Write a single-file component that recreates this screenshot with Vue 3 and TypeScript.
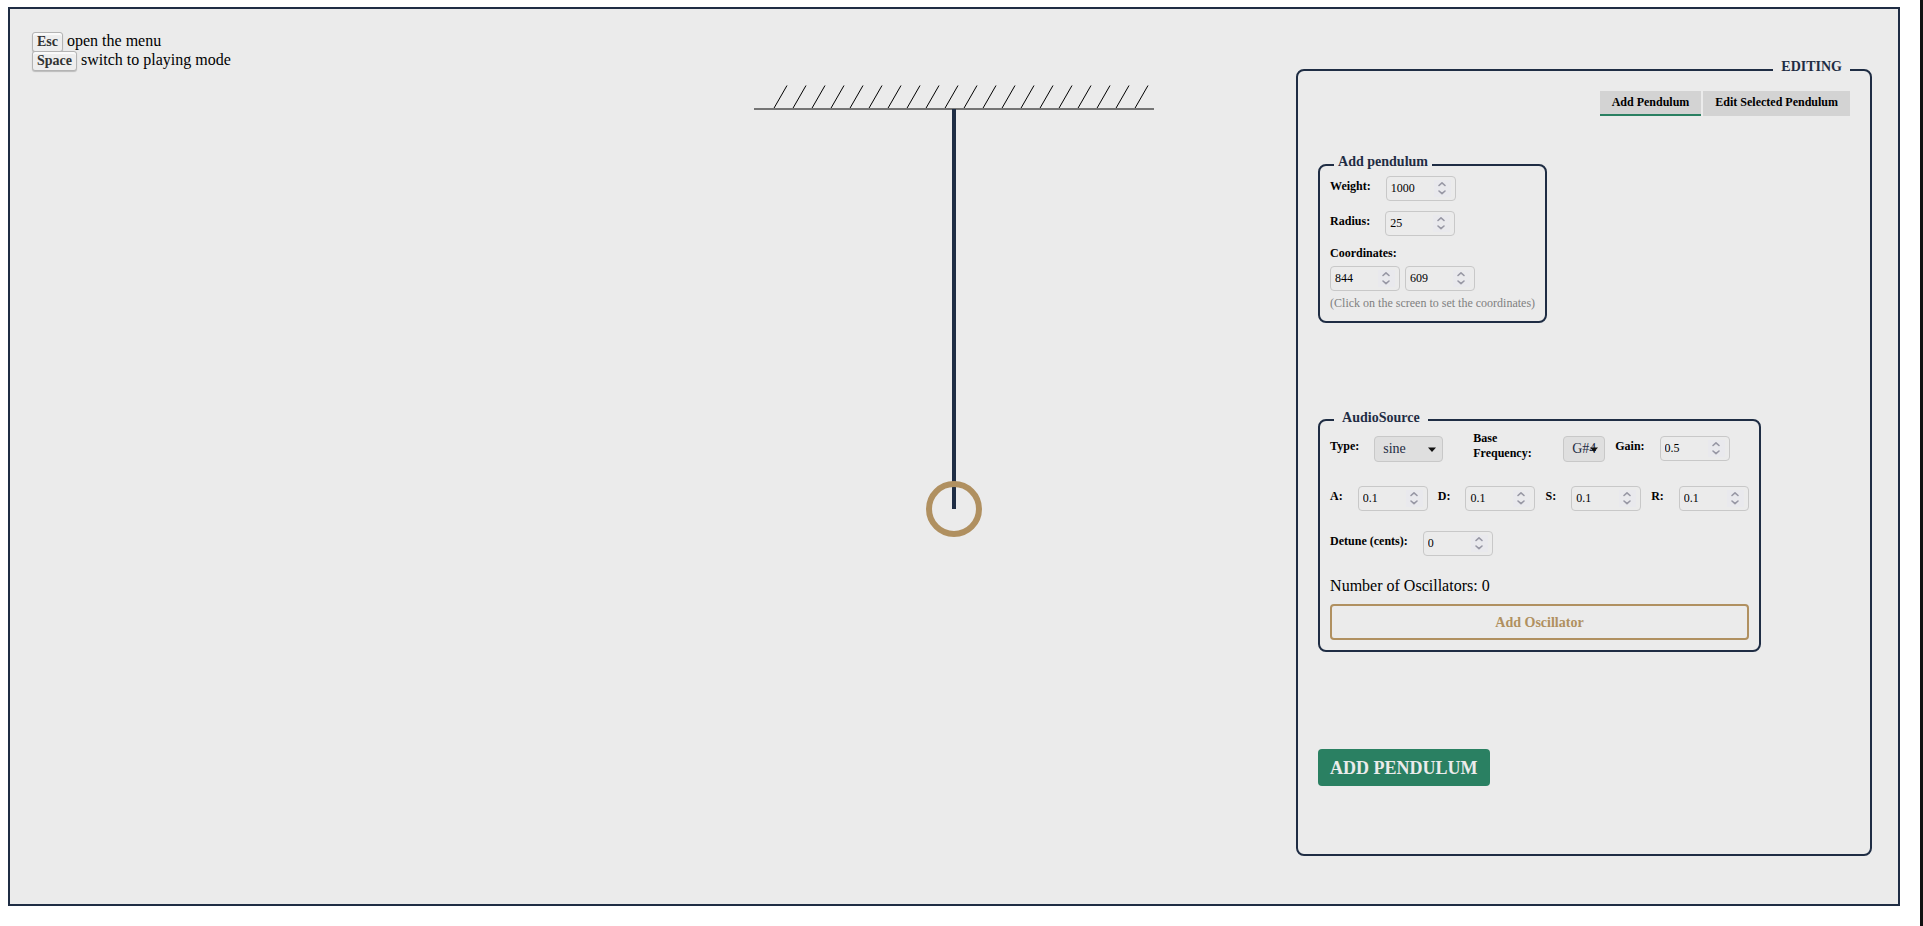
<script setup lang="ts">
import { computed, defineComponent, h, reactive, ref } from 'vue'

type Tab = 'add' | 'edit'

const tabs: { id: Tab; label: string }[] = [
  { id: 'add', label: 'Add Pendulum' },
  { id: 'edit', label: 'Edit Selected Pendulum' },
]
const activeTab = ref<Tab>('add')

const pendulum = reactive({ weight: 1000, radius: 25, x: 844, y: 609 })
const source = reactive({ type: 'sine', note: 'G#4', gain: 0.5, detune: 0 })
const envelope = reactive([
  { key: 'A', value: 0.1 },
  { key: 'D', value: 0.1 },
  { key: 'S', value: 0.1 },
  { key: 'R', value: 0.1 },
])
const oscillators = ref<string[]>([])
const oscillatorCount = computed(() => oscillators.value.length)

const waveTypes = ['sine', 'square', 'sawtooth', 'triangle']
const notes = ['E4', 'F4', 'F#4', 'G4', 'G#4', 'A4']
const hatches = Array.from({ length: 20 }, (_, i) => 20.5 + i * 19)

const NumberBox = defineComponent({
  props: { modelValue: { type: Number, required: true }, step: { type: Number, default: 1 } },
  emits: ['update:modelValue'],
  inheritAttrs: false,
  setup(props, { emit, attrs }) {
    return () =>
      h('span', { class: 'number-box' }, [
        h('input', {
          ...attrs,
          type: 'number',
          step: props.step,
          value: props.modelValue,
          onInput: (e: Event) => emit('update:modelValue', Number((e.target as HTMLInputElement).value)),
        }),
        h('svg', { class: 'spinner', viewBox: '0 0 17 17', 'aria-hidden': 'true' }, [
          h('path', { d: 'M5 5.5 L8 2.8 L11 5.5 M5 11 L8 13.7 L11 11' }),
        ]),
      ])
  },
})
</script>

<template>
  <main class="frame">
    <svg class="scene" viewBox="0 0 402 455" role="img" aria-label="Pendulum">
      <line v-for="x in hatches" :key="x" class="hatch" :x1="x" y1="25" :x2="x + 13.5" y2="1.5" />
      <line class="ceiling" x1="1" y1="25" x2="401" y2="25" />
      <line class="rod" x1="201" y1="25" x2="201" y2="425" />
      <circle class="bob" cx="201" cy="425" r="25" />
    </svg>

    <div class="hints">
      <div><kbd>Esc</kbd> open the menu</div>
      <div><kbd>Space</kbd> switch to playing mode</div>
    </div>

    <fieldset class="box panel">
      <legend>EDITING</legend>
      <nav class="tabs">
        <button
          v-for="tab in tabs"
          :key="tab.id"
          type="button"
          class="tab"
          :class="{ active: activeTab === tab.id }"
          @click="activeTab = tab.id"
        >{{ tab.label }}</button>
      </nav>

      <fieldset class="box group shape">
        <legend>Add pendulum</legend>
        <div class="field">
          <label for="weight">Weight:</label>
          <NumberBox id="weight" v-model="pendulum.weight" />
        </div>
        <div class="field">
          <label for="radius">Radius:</label>
          <NumberBox id="radius" v-model="pendulum.radius" />
        </div>
        <div class="coordinates">
          <label for="coord-x">Coordinates:</label>
          <div class="pair">
            <NumberBox id="coord-x" v-model="pendulum.x" />
            <NumberBox id="coord-y" v-model="pendulum.y" aria-label="Y coordinate" />
          </div>
          <small>(Click on the screen to set the coordinates)</small>
        </div>
      </fieldset>

      <fieldset class="box group audio">
        <legend>AudioSource</legend>
        <div class="row">
          <div class="field type">
            <label for="type">Type:</label>
            <span class="select-box">
              <select id="type" v-model="source.type" class="wave">
                <option v-for="t in waveTypes" :key="t">{{ t }}</option>
              </select>
              <svg class="caret" viewBox="0 0 8 5" aria-hidden="true"><path d="M0 0.5H8L4 5Z" /></svg>
            </span>
          </div>
          <div class="field">
            <label for="note" class="two-line">Base Frequency:</label>
            <span class="select-box">
              <select id="note" v-model="source.note" class="note">
                <option v-for="n in notes" :key="n">{{ n }}</option>
              </select>
              <svg class="caret" viewBox="0 0 8 5" aria-hidden="true"><path d="M0 0.5H8L4 5Z" /></svg>
            </span>
          </div>
          <div class="field">
            <label for="gain">Gain:</label>
            <NumberBox id="gain" v-model="source.gain" :step="0.1" />
          </div>
        </div>
        <div class="row">
          <div v-for="stage in envelope" :key="stage.key" class="field">
            <label :for="`env-${stage.key}`">{{ stage.key }}:</label>
            <NumberBox :id="`env-${stage.key}`" v-model="stage.value" :step="0.1" />
          </div>
        </div>
        <div class="field">
          <label for="detune">Detune (cents):</label>
          <NumberBox id="detune" v-model="source.detune" />
        </div>
        <div class="oscillators">
          <span>Number of Oscillators: {{ oscillatorCount }}</span>
          <button type="button" class="outline" @click="oscillators.push('sine')">Add Oscillator</button>
        </div>
      </fieldset>

      <button type="button" class="primary">ADD PENDULUM</button>
    </fieldset>
  </main>
</template>

<style>
html {
  min-height: 100vh;
  border-right: 3px solid #111;
  background: #fff;
}
body {
  margin: 0;
}
.number-box {
  position: relative;
  display: inline-flex;
}
.number-box input {
  box-sizing: border-box;
  width: 70px;
  height: 25px;
  margin: 0;
  padding: 0 20px 0 4px;
  border: 1px solid #c8c8c8;
  border-radius: 4px;
  background: transparent;
  color: #000;
  font: 12px "Liberation Serif", serif;
  appearance: textfield;
}
.number-box input::-webkit-inner-spin-button,
.number-box input::-webkit-outer-spin-button {
  appearance: none;
  margin: 0;
}
.number-box .spinner {
  position: absolute;
  top: 4px;
  right: 5px;
  width: 17px;
  height: 17px;
  background: #e9e9ed;
  pointer-events: none;
}
.number-box .spinner path {
  fill: none;
  stroke: #9797a4;
  stroke-width: 1.6;
  stroke-linecap: round;
  stroke-linejoin: round;
}
</style>

<style scoped>
.frame {
  box-sizing: border-box;
  display: grid;
  align-items: start;
  min-height: calc(100vh - 27px);
  margin: 7px 20px 0 8px;
  border: 2px solid #1f2d44;
  background: #ebebeb;
  color: #000;
  font: 16px/19px "Liberation Serif", serif;
}
.frame > * {
  grid-area: 1 / 1;
}
.scene {
  justify-self: center;
  width: 402px;
  margin-top: 75px;
}
.hatch {
  stroke: #000;
  stroke-width: 1;
}
.ceiling {
  stroke: #757575;
  stroke-width: 2;
}
.rod {
  stroke: #1f2d44;
  stroke-width: 4;
}
.bob {
  fill: none;
  stroke: #b09060;
  stroke-width: 6;
}
.hints {
  justify-self: start;
  margin: 22px;
}
kbd {
  display: inline-block;
  padding: 2px 4px;
  border: 1px solid #b4b4b4;
  border-radius: 3px;
  background: #eee;
  box-shadow: 0 1px 1px rgba(0, 0, 0, 0.2), inset 0 2px 0 0 rgba(255, 255, 255, 0.7);
  color: #333;
  font: bold 14px/14px "Liberation Serif", serif;
}
.hints > div {
  height: 19px;
}
.box {
  box-sizing: border-box;
  min-width: 0;
  margin: 0;
  border: 2px solid #1f2d44;
  border-radius: 8px;
}
legend {
  padding: 0 8px 6px;
  color: #1f2d44;
  font-size: 14px;
  font-weight: bold;
  line-height: 16px;
}
.panel {
  justify-self: end;
  width: calc(30vw - 1px);
  min-height: calc(85vh + 10px);
  margin: 50px 26px 0 0;
  padding: 10px 20px;
}
.panel > legend {
  margin-left: auto;
}
.tabs {
  display: flex;
  justify-content: flex-end;
  gap: 2px;
}
.tab {
  height: 25px;
  padding: 0 12px;
  border: 0;
  border-bottom: 2px solid transparent;
  background: #d3d3d3;
  color: #000;
  font: bold 12px "Liberation Serif", serif;
}
.tab.active {
  border-bottom-color: #2a8062;
}
.group {
  width: fit-content;
  padding: 0 10px 10px;
}
.group > legend {
  margin-left: 4px;
}
.shape {
  margin-top: 38px;
}
.shape > legend {
  padding: 0 4px 6px;
}
.audio {
  margin-top: 86px;
}
.audio > legend {
  padding-bottom: 4px;
  line-height: 18px;
}
.field {
  display: flex;
  align-items: center;
  gap: 15px;
}
label {
  font-size: 12px;
  font-weight: bold;
  line-height: 15px;
}
.field label {
  margin-bottom: 5px;
}
.shape .field {
  margin-bottom: 10px;
}
.coordinates {
  display: flex;
  flex-direction: column;
  gap: 5px;
}
.pair {
  display: flex;
  gap: 5px;
}
small {
  color: #808080;
  font-size: 12px;
  line-height: 15px;
}
.row {
  display: flex;
  gap: 10px;
}
.audio .row {
  margin-bottom: 20px;
}
.type {
  margin-right: 20px;
}
.two-line {
  width: 75px;
}
.select-box {
  position: relative;
  display: inline-flex;
}
select {
  height: 26px;
  margin: 0;
  padding: 0 8px;
  border: 1px solid #c8c8c8;
  border-radius: 4px;
  background: #dfdfdf;
  color: #1f2d44;
  font: 14px "Liberation Serif", serif;
  appearance: none;
}
.wave {
  width: 69px;
}
.note {
  width: 42px;
}
.caret {
  position: absolute;
  top: 11px;
  right: 7px;
  width: 8px;
  height: 5px;
  fill: #111;
  pointer-events: none;
}
.oscillators {
  display: flex;
  flex-direction: column;
  gap: 8px;
  margin-top: 20px;
  line-height: 20px;
}
.outline {
  height: 36px;
  padding: 2px 12px 0;
  border: 2px solid #b09060;
  border-radius: 4px;
  background: transparent;
  color: #b09060;
  font: bold 14px "Liberation Serif", serif;
}
.primary {
  display: block;
  height: 37px;
  margin-top: 97px;
  padding: 2px 12px 0;
  border: 0;
  border-radius: 4px;
  background: #2a8062;
  color: #ebebeb;
  font: bold 18px "Liberation Serif", serif;
}
</style>
